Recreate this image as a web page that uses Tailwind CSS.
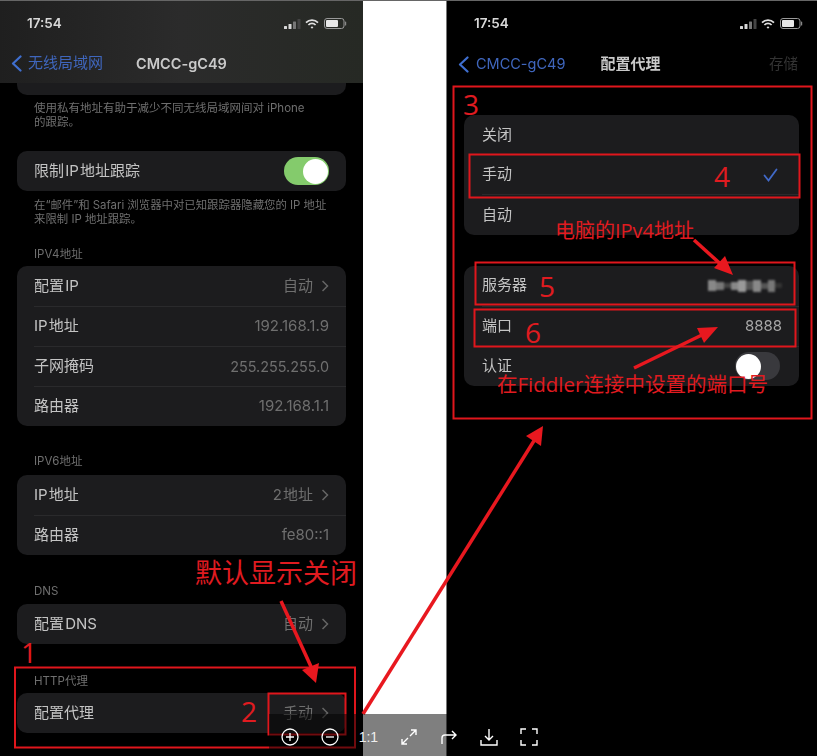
<!DOCTYPE html>
<html lang="zh">
<head>
<meta charset="utf-8">
<script src="https://cdn.jsdelivr.net/npm/@tailwindcss/browser@4"></script>
</head>
<body class="m-0 bg-white">
<div class="relative w-[817px] h-[756px] overflow-hidden bg-white font-['Inter','Noto_Sans_CJK_SC',sans-serif]">
  <div class="flex w-full h-full border-t border-[#666] blur-[0.5px]">

    <!-- left phone -->
    <section class="w-[363px] h-full bg-black flex flex-col shrink-0">
      <header class="h-[82px] shrink-0 flex flex-col bg-gradient-to-r from-[#1f1f1f] via-[#2b2b2b] to-[#262924]">
        <div class="h-[44px] pl-[27px] pr-[16px] flex items-center justify-between">
          <span class="text-[13.5px] font-semibold text-[#d8d8d8] mt-[1px]">17:54</span>
          <div class="flex items-center gap-[4px] mt-[1px]">
            <svg width="17" height="10" viewBox="0 0 17 10" fill="#d8d8d8"><rect x="0" y="7" width="3" height="3" rx=".5"/><rect x="4.5" y="5" width="3" height="5" rx=".5"/><rect x="9" y="2.5" width="3" height="7.5" rx=".5" fill="#777"/><rect x="13.5" y="0" width="3" height="10" rx=".5" fill="#444"/></svg>
            <svg width="14" height="10" viewBox="0 0 14 10" fill="none" stroke="#e0e0e0" stroke-width="1.7"><path d="M1 3.6a8.5 8.5 0 0 1 12 0"/><path d="M3.4 6a5 5 0 0 1 7.2 0"/><path d="M7 9.8 5.6 8.3a2 2 0 0 1 2.8 0z" fill="#e0e0e0" stroke="none"/></svg>
            <svg width="23" height="11" viewBox="0 0 23 11" class="ml-[1px]"><rect x=".5" y=".5" width="19.5" height="10" rx="2.5" fill="none" stroke="#999"/><rect x="2" y="2" width="12" height="7" rx="1" fill="#e8e8e8"/><rect x="21" y="3.5" width="1.2" height="4" rx=".6" fill="#888"/></svg>
          </div>
        </div>
        <div class="flex-1 flex items-center pl-[11px] pb-[1px]">
          <svg width="11" height="17" viewBox="0 0 11 17" fill="none" stroke="#3f6fd0" stroke-width="2.2" stroke-linecap="round" stroke-linejoin="round"><path d="M9.5 1.5 2 8.5l7.5 7"/></svg>
          <span class="ml-[6px] text-[15px] text-[#3f66bd]">无线局域网</span>
          <span class="ml-[33px] text-[14.5px] font-semibold text-[#c9c9c9]">CMCC-gC49</span>
        </div>
      </header>
      <div class="px-[17px] flex flex-col flex-1 text-[15px] text-[#c4c4c4] [word-spacing:-3px]">
        <div class="h-[12px] bg-[#1c1c1e] rounded-b-[10px] shrink-0"></div>
        <p class="mt-[6px] px-[17px] h-[49px] text-[11.5px] leading-[14px] text-[#6f6f6f] whitespace-nowrap [word-spacing:0px]">使用私有地址有助于减少不同无线局域网间对 iPhone<br>的跟踪。</p>
        <div class="h-[40px] mt-[1px] rounded-[10px] bg-[#1c1c1e] flex items-center justify-between pl-[17px] pr-[17px]">
          <span>限制 IP 地址跟踪</span>
          <span class="w-[45px] h-[28px] rounded-full bg-[#84cb6c] flex items-center justify-end pr-[1px]"><span class="w-[25px] h-[25px] rounded-full bg-white"></span></span>
        </div>
        <p class="mt-[7px] px-[17px] h-[42px] text-[11.4px] leading-[14px] text-[#6f6f6f] whitespace-nowrap [word-spacing:0px]">在“邮件”和 Safari 浏览器中对已知跟踪器隐藏您的 IP 地址<br>来限制 IP 地址跟踪。</p>
        <p class="mt-[7px] px-[17px] h-[19px] leading-[14px] text-[11.5px] text-[#6f6f6f]">IPV4 地址</p>
        <div class="rounded-[10px] bg-[#1c1c1e] flex flex-col">
          <div class="h-[40px] flex items-center justify-between pl-[17px] pr-[17px]"><span>配置 IP</span><span class="flex items-center gap-[9px] text-[#6f6f6f]">自动<svg width="7" height="12" viewBox="0 0 7 12" fill="none" stroke="#666" stroke-width="1.5"><path d="m.5 1 5 5-5 5"/></svg></span></div>
          <div class="h-[40px] ml-[17px] pr-[17px] flex items-center justify-between border-t border-[#2a2a2c]"><span>IP 地址</span><span class="text-[#6f6f6f]">192.168.1.9</span></div>
          <div class="h-[40px] ml-[17px] pr-[17px] flex items-center justify-between border-t border-[#2a2a2c]"><span>子网掩码</span><span class="text-[14.4px] text-[#6f6f6f]">255.255.255.0</span></div>
          <div class="h-[40px] ml-[17px] pr-[17px] flex items-center justify-between border-t border-[#2a2a2c]"><span>路由器</span><span class="text-[#6f6f6f]">192.168.1.1</span></div>
        </div>
        <p class="mt-[28px] px-[17px] h-[21px] leading-[14px] text-[11.5px] text-[#6f6f6f]">IPV6 地址</p>
        <div class="rounded-[10px] bg-[#1c1c1e] flex flex-col">
          <div class="h-[40px] flex items-center justify-between pl-[17px] pr-[17px]"><span>IP 地址</span><span class="flex items-center gap-[9px] text-[#6f6f6f]">2 地址<svg width="7" height="12" viewBox="0 0 7 12" fill="none" stroke="#666" stroke-width="1.5"><path d="m.5 1 5 5-5 5"/></svg></span></div>
          <div class="h-[40px] ml-[17px] pr-[17px] flex items-center justify-between border-t border-[#2a2a2c]"><span>路由器</span><span class="text-[#6f6f6f]">fe80::1</span></div>
        </div>
        <p class="mt-[29px] px-[17px] h-[20px] leading-[14px] text-[11.5px] text-[#6f6f6f]">DNS</p>
        <div class="h-[40px] rounded-[10px] bg-[#1c1c1e] flex items-center justify-between pl-[17px] pr-[17px]"><span>配置 DNS</span><span class="flex items-center gap-[9px] text-[#6f6f6f]">自动<svg width="7" height="12" viewBox="0 0 7 12" fill="none" stroke="#666" stroke-width="1.5"><path d="m.5 1 5 5-5 5"/></svg></span></div>
        <p class="mt-[30px] px-[17px] h-[19px] leading-[14px] text-[11.5px] text-[#6f6f6f]">HTTP 代理</p>
        <div class="h-[40px] rounded-[10px] bg-[#1c1c1e] flex items-center justify-between pl-[17px] pr-[17px]"><span>配置代理</span><span class="flex items-center gap-[9px] text-[#6f6f6f]">手动<svg width="7" height="12" viewBox="0 0 7 12" fill="none" stroke="#666" stroke-width="1.5"><path d="m.5 1 5 5-5 5"/></svg></span></div>
      </div>
    </section>

    <!-- white gap -->
    <div class="w-[83px] h-full bg-white shrink-0"></div>

    <!-- right phone -->
    <section class="flex-1 h-full bg-black flex flex-col border-l border-[#777]">
      <header class="h-[82px] shrink-0 flex flex-col">
        <div class="h-[44px] pl-[27px] pr-[14px] flex items-center justify-between">
          <span class="text-[13.5px] font-semibold text-[#d8d8d8] mt-[1px]">17:54</span>
          <div class="flex items-center gap-[4px] mt-[1px]">
            <svg width="17" height="10" viewBox="0 0 17 10" fill="#d8d8d8"><rect x="0" y="7" width="3" height="3" rx=".5"/><rect x="4.5" y="5" width="3" height="5" rx=".5"/><rect x="9" y="2.5" width="3" height="7.5" rx=".5" fill="#777"/><rect x="13.5" y="0" width="3" height="10" rx=".5" fill="#444"/></svg>
            <svg width="14" height="10" viewBox="0 0 14 10" fill="none" stroke="#e0e0e0" stroke-width="1.7"><path d="M1 3.6a8.5 8.5 0 0 1 12 0"/><path d="M3.4 6a5 5 0 0 1 7.2 0"/><path d="M7 9.8 5.6 8.3a2 2 0 0 1 2.8 0z" fill="#e0e0e0" stroke="none"/></svg>
            <svg width="23" height="11" viewBox="0 0 23 11" class="ml-[1px]"><rect x=".5" y=".5" width="19.5" height="10" rx="2.5" fill="none" stroke="#999"/><rect x="2" y="2" width="12" height="7" rx="1" fill="#e8e8e8"/><rect x="21" y="3.5" width="1.2" height="4" rx=".6" fill="#888"/></svg>
          </div>
        </div>
        <div class="flex-1 flex items-center pl-[11px] pr-[19px]">
          <svg width="11" height="17" viewBox="0 0 11 17" fill="none" stroke="#3f6fd0" stroke-width="2.2" stroke-linecap="round" stroke-linejoin="round"><path d="M9.5 1.5 2 8.5l7.5 7"/></svg>
          <span class="ml-[7px] text-[14.5px] text-[#3f66bd]">CMCC-gC49</span>
          <span class="ml-[35px] text-[15px] font-semibold text-[#c9c9c9]">配置代理</span>
          <span class="ml-auto text-[14.5px] text-[#333]">存储</span>
        </div>
      </header>
      <div class="px-[17px] pt-[32px] flex flex-col text-[15px] text-[#c4c4c4]">
        <div class="w-[335px] rounded-[10px] bg-[#1c1c1e] flex flex-col">
          <div class="h-[40px] pl-[18px] flex items-center"><span>关闭</span></div>
          <div class="h-[40px] ml-[18px] pr-[21px] flex items-center justify-between border-b border-[#2a2a2c]"><span>手动</span><svg width="15" height="14" viewBox="0 0 15 14" fill="none" stroke="#4169c8" stroke-width="1.8" stroke-linecap="round"><path d="m1.5 7.5 4 5 8-11"/></svg></div>
          <div class="h-[40px] pl-[18px] flex items-center"><span>自动</span></div>
        </div>
        <div class="w-[335px] mt-[31px] rounded-[10px] bg-[#1c1c1e] flex flex-col">
          <div class="h-[40px] pb-[1px] pl-[18px] pr-[17px] flex items-center justify-between"><span>服务器</span>
            <span class="flex items-center blur-[1px]">
              <i class="w-[8px] h-[11px] bg-[#888]"></i><i class="w-[8px] h-[8px] bg-[#777]"></i><i class="w-[7px] h-[5px] bg-[#444]"></i><i class="w-[7px] h-[8px] bg-[#888]"></i><i class="w-[8px] h-[12px] bg-[#999]"></i><i class="w-[7px] h-[9px] bg-[#555]"></i><i class="w-[8px] h-[12px] bg-[#888]"></i><i class="w-[7px] h-[6px] bg-[#555]"></i><i class="w-[7px] h-[12px] bg-[#777]"></i><i class="w-[7px] h-[5px] bg-[#333]"></i>
            </span></div>
          <div class="h-[40px] pb-[1px] ml-[18px] pr-[17px] flex items-center justify-between border-t border-[#2a2a2c]"><span>端口</span><span class="text-[#a8a8a8]">8888</span></div>
          <div class="h-[40px] pb-[1px] ml-[18px] pr-[19px] flex items-center justify-between border-t border-[#2a2a2c]"><span>认证</span>
            <span class="w-[45px] h-[28px] rounded-full bg-[#39393d] flex items-center pl-[1px]"><span class="w-[25px] h-[25px] rounded-full bg-white"></span></span></div>
        </div>
      </div>
    </section>
  </div>

  <!-- red annotations over the screenshots -->
  <svg class="absolute inset-0 blur-[0.4px]" width="817" height="756" viewBox="0 0 817 756" fill="none" stroke="#e0161c" stroke-width="2">
    <rect x="15" y="667.5" width="340" height="80"/>
    <rect x="268.5" y="693.5" width="77" height="41"/>
    <rect x="453.5" y="86.5" width="358" height="332"/>
    <rect x="469.5" y="154.5" width="330" height="43"/>
    <rect x="475.5" y="262.5" width="319" height="42"/>
    <rect x="474.5" y="309.5" width="321" height="37"/>
    <g stroke="#e8181f" stroke-width="3.5">
      <path d="M281 601 313 671"/>
      <path d="M363 714 537 436"/>
      <path d="M694 240 726 269"/>
      <path d="M634 368 706 333"/>
    </g>
    <g fill="#e8181f" stroke="none">
      <path d="M316 683 302 670 319 663z"/>
      <path d="M543 426 541 446 526 436z"/>
      <path d="M733 275 714 268 725 256z"/>
      <path d="M718 327 704 343 697 328z"/>
    </g>
  </svg>
  <span class="absolute left-[195px] top-[553px] text-[27px] leading-[38px] text-[#e01b20] font-['Noto_Sans_CJK_SC'] whitespace-nowrap">默认显示关闭</span>
  <span class="absolute left-[555px] top-[218px] text-[20px] leading-[26px] text-[#e01b20] font-['Open_Sans','Noto_Sans_CJK_SC'] whitespace-nowrap">电脑的IPv4地址</span>
  <span class="absolute left-[497px] top-[371px] text-[20.5px] leading-[26px] text-[#e01b20] font-['Open_Sans','Noto_Sans_CJK_SC'] whitespace-nowrap">在Fiddler连接中设置的端口号</span>
  <span class="absolute left-[21px] top-[635px] text-[28px] leading-[34px] text-[#e01b20] font-['Open_Sans']">1</span>
  <span class="absolute left-[241px] top-[694px] text-[28px] leading-[34px] text-[#e01b20] font-['Open_Sans']">2</span>
  <span class="absolute left-[463px] top-[87px] text-[28px] leading-[34px] text-[#e01b20] font-['Open_Sans']">3</span>
  <span class="absolute left-[714px] top-[159px] text-[28px] leading-[34px] text-[#e01b20] font-['Open_Sans']">4</span>
  <span class="absolute left-[539px] top-[269px] text-[28px] leading-[34px] text-[#e01b20] font-['Open_Sans']">5</span>
  <span class="absolute left-[525px] top-[315px] text-[28px] leading-[34px] text-[#e01b20] font-['Open_Sans']">6</span>

  <!-- viewer toolbar -->
  <div class="absolute left-[269px] bottom-0 w-[285px] h-[42px] bg-black/50 flex items-center justify-between pl-[12px] pr-[16px] pt-[4px] text-white">
    <svg width="18" height="18" viewBox="0 0 18 18" fill="none" stroke="#fff" stroke-width="1.3"><circle cx="9" cy="9" r="8"/><path d="M5 9h8M9 5v8"/></svg>
    <svg width="18" height="18" viewBox="0 0 18 18" fill="none" stroke="#fff" stroke-width="1.3"><circle cx="9" cy="9" r="8"/><path d="M5 9h8"/></svg>
    <span class="w-[18px] -translate-x-[2px] text-[14px] text-center font-['Liberation_Sans'] text-[#eee]">1:1</span>
    <svg width="18" height="18" viewBox="0 0 18 18" fill="none" stroke="#fff" stroke-width="1.4"><path d="M11 2h5v5M16 2l-6 6M7 16H2v-5M2 16l6-6"/></svg>
    <svg width="18" height="18" viewBox="0 0 18 18" fill="none" stroke="#fff" stroke-width="1.4"><path d="M2 16V10a3 3 0 0 1 3-3h11M12 3l4 4-4 4"/></svg>
    <svg width="18" height="18" viewBox="0 0 18 18" fill="none" stroke="#fff" stroke-width="1.4"><path d="M9 1v11M5 8l4 4 4-4M1 12v5h16v-5"/></svg>
    <svg width="18" height="18" viewBox="0 0 18 18" fill="none" stroke="#fff" stroke-width="1.4"><path d="M1 6V1h5M12 1h5v5M17 12v5h-5M6 17H1v-5"/></svg>
  </div>
</div>
</body>
</html>
